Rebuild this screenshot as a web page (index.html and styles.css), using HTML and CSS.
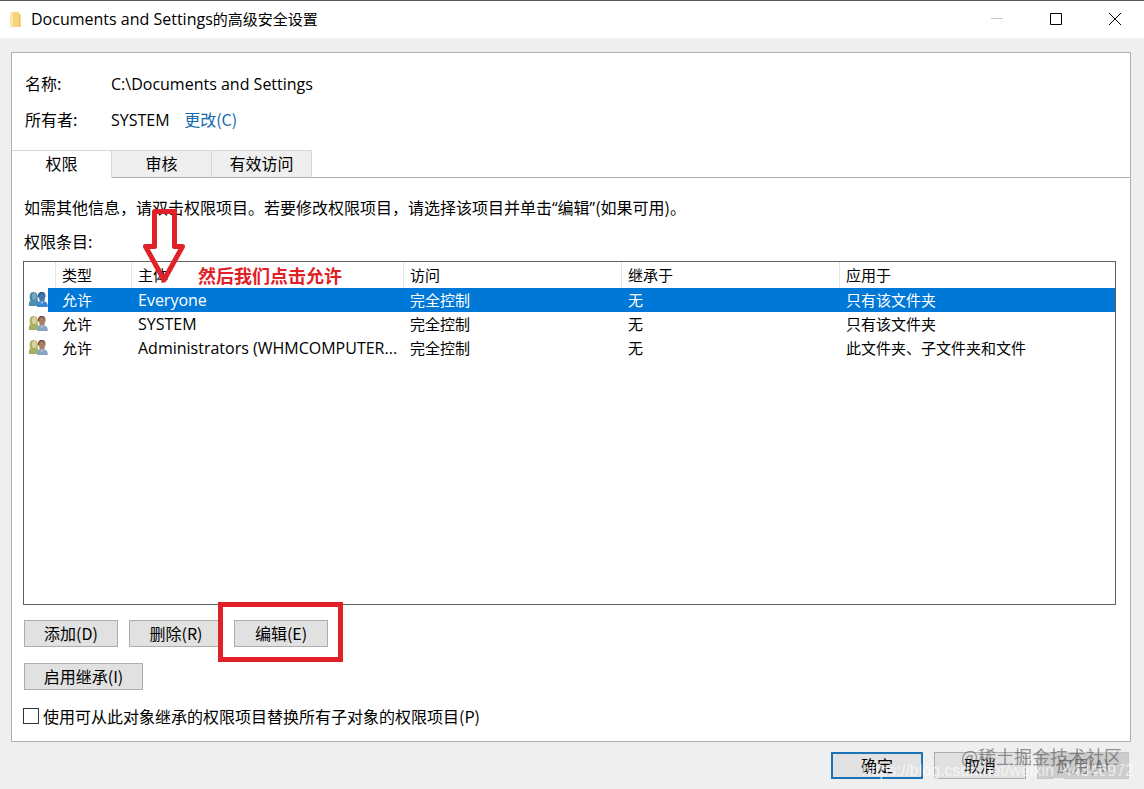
FILE: index.html
```html
<!DOCTYPE html>
<html lang="zh-CN">
<head>
  <meta charset="UTF-8" />
  <title>Documents and Settings的高级安全设置</title>
  <meta name="viewport" content="width=device-width, initial-scale=1" />
  <link rel="stylesheet" href="styles.css">
</head>
<body>

  <svg class="defs" width="0" height="0" aria-hidden="true">
    <symbol id="users" viewBox="0 0 20 18">
      <path class="body-a" d="M1 15c-.6-4 .6-6 4-6.500h3c2.500.5 3.500 3 3 6.500z" />
      <path class="hair-a" d="M2 9.500C1 4 2 1 5.500 1s5 3 4 8.500z" />
      <ellipse class="face-a" cx="6.300" cy="5.500" rx="2.300" ry="3.400" />
      <path class="body-b" d="M9 16c-.3-4 1-5.500 4-6h2.500c3 .6 4.500 2.500 4.300 6z" />
      <path class="hair-b" d="M9.800 6.500C9.500 3 11 1 13.800 1s4.200 2 3.500 5.500z" />
      <ellipse class="face-b" cx="14" cy="6.500" rx="3" ry="4.200" />
      <path class="shirt" d="M12.500 10.500l1.500 3 1.500-3z" />
    </symbol>
  </svg>

  <header class="titlebar">
    <svg class="folder" width="12" height="18" viewBox="0 0 12 18" aria-hidden="true">
      <path d="M0 1h9v13l2 0v2H0z" fill="#f6d57c" />
      <path d="M0 1h3v16l-3-1z" fill="#fbe7a8" />
      <path d="M9 3h1.500v12H9z" fill="#e9bd55" />
    </svg>
    <h1><span class="latin">Documents and Settings</span>的高级安全设置</h1>
    <div class="window-buttons">
      <button type="button" aria-label="最小化" disabled>
        <svg width="12" height="12" viewBox="0 0 12 12"><path d="M0 5.500h12" stroke="#c4c4c4" /></svg>
      </button>
      <button type="button" aria-label="最大化">
        <svg width="12" height="12" viewBox="0 0 12 12"><path d="M.5.5h11v11H.5z" fill="none" stroke="#000" /></svg>
      </button>
      <button type="button" aria-label="关闭">
        <svg width="12" height="12" viewBox="0 0 12 12"><path d="M0 0l12 12M12 0L0 12" stroke="#000" /></svg>
      </button>
    </div>
  </header>

  <main class="panel">
    <dl class="info">
      <dt>名称:</dt>
      <dd><span class="latin">C:\Documents and Settings</span></dd>
      <dt>所有者:</dt>
      <dd><span class="latin">SYSTEM</span> <a href="#">更改(C)</a></dd>
    </dl>

    <div class="tabs" role="tablist">
      <button type="button" role="tab" class="tab active" aria-selected="true">权限</button>
      <button type="button" role="tab" class="tab">审核</button>
      <button type="button" role="tab" class="tab">有效访问</button>
    </div>

    <section class="content">
      <p class="hint">如需其他信息，请双击权限项目。若要修改权限项目，请选择该项目并单击<span class="latin">“</span>编辑<span class="latin">”</span>(如果可用)。</p>
      <p class="list-title" id="list-title">权限条目:</p>

      <div class="list">
        <table aria-labelledby="list-title">
          <colgroup>
            <col class="col-icon"><col class="col-type"><col class="col-name"><col class="col-access"><col class="col-from"><col>
          </colgroup>
          <thead>
            <tr>
              <th></th>
              <th>类型</th>
              <th class="marked">主体
                <svg class="arrow" width="42" height="76" viewBox="0 0 42 76" aria-hidden="true">
                  <path d="M11.500 3.500h20v35h8L21 72 2.500 38.500h9z" fill="none" stroke="#e02127" stroke-width="5" stroke-linejoin="round" />
                </svg>
                <span class="note">然后我们点击允许</span>
              </th>
              <th>访问</th>
              <th>继承于</th>
              <th>应用于</th>
            </tr>
          </thead>
          <tbody>
            <tr class="selected">
              <td><svg class="users blue" width="20" height="18"><use href="#users" /></svg></td>
              <td>允许</td>
              <td><span class="latin">Everyone</span></td>
              <td>完全控制</td>
              <td>无</td>
              <td>只有该文件夹</td>
            </tr>
            <tr>
              <td><svg class="users" width="20" height="18"><use href="#users" /></svg></td>
              <td>允许</td>
              <td><span class="latin">SYSTEM</span></td>
              <td>完全控制</td>
              <td>无</td>
              <td>只有该文件夹</td>
            </tr>
            <tr>
              <td><svg class="users" width="20" height="18"><use href="#users" /></svg></td>
              <td>允许</td>
              <td><span class="latin">Administrators (WHMCOMPUTER...</span></td>
              <td>完全控制</td>
              <td>无</td>
              <td>此文件夹、子文件夹和文件</td>
            </tr>
          </tbody>
        </table>
      </div>

      <div class="actions">
        <button type="button" class="btn">添加(D)</button>
        <button type="button" class="btn">删除(R)</button>
        <span class="highlight"><button type="button" class="btn">编辑(E)</button></span>
      </div>
      <div class="actions">
        <button type="button" class="btn wide">启用继承(I)</button>
      </div>

      <label class="replace">
        <input type="checkbox">
        使用可从此对象继承的权限项目替换所有子对象的权限项目(P)
      </label>
    </section>
  </main>

  <footer class="footer">
    <button type="button" class="btn default">确定</button>
    <button type="button" class="btn">取消</button>
    <button type="button" class="btn" disabled>应用(A)</button>
    <span class="watermark community">@稀土掘金技术社区</span>
    <span class="watermark blog">https://blog.csdn.net/weixin_44346972</span>
  </footer>

</body>
</html>
```

FILE: styles.css
```css
* {
  box-sizing: border-box;
}
body {
  margin: 0;
  min-height: 100vh;
  display: flex;
  flex-direction: column;
  border-top: 1px solid #5c5858;
  background: #efefef;
  color: #000;
  font: 16px/24px "Noto Sans CJK SC", sans-serif;
}
h1, p, dl, dd {
  margin: 0;
}
button {
  font: inherit;
  color: inherit;
}
.latin {
  font: 16px/22px "Open Sans", sans-serif;
}
.defs {
  position: absolute;
}

/* title bar */
.titlebar {
  display: flex;
  align-items: center;
  height: 37px;
  padding-left: 10px;
  background: #fff;
}
.titlebar h1 {
  flex: 1;
  margin-left: 9px;
  padding-bottom: 2px;
  font-size: 15px;
  font-weight: normal;
}
.window-buttons {
  display: flex;
}
.window-buttons button {
  width: 59px;
  height: 37px;
  padding: 0 0 2px;
  border: 0;
  background: none;
}
.window-buttons svg {
  display: block;
  margin: auto;
}

/* main panel */
.panel {
  flex: 1;
  display: flex;
  flex-direction: column;
  margin: 14px 13px 0 11px;
  border: 1px solid #b0b0b0;
  background: #fff;
}
.info {
  display: grid;
  grid-template-columns: 86px 1fr;
  row-gap: 12px;
  padding: 18px 13px 19px;
}
.info a {
  margin-left: 11px;
  color: #1468ae;
  text-decoration: none;
}

.tabs {
  display: flex;
}
.tabs::after {
  content: "";
  flex: 1;
  border-bottom: 1px solid #b0b0b0;
}
.tab {
  width: 100px;
  height: 28px;
  padding: 0 0 2px;
  border: 1px solid #d5d5d5;
  border-left: 0;
  border-bottom-color: #b0b0b0;
  background: #efefef;
  line-height: 24px;
}
.tab.active {
  border-bottom-color: #fff;
  background: #fff;
}

.content {
  flex: 1;
  display: flex;
  flex-direction: column;
  padding: 17px 14px 13px 11px;
}
.hint, .list-title {
  padding-left: 1px;
}
.list-title {
  margin: 10px 0 8px;
}

/* permission entries */
.list {
  flex: 1;
  border: 1px solid #5f5f5f;
}
table {
  width: 100%;
  table-layout: fixed;
  border-collapse: collapse;
  font-size: 15px;
  line-height: 22px;
}
.col-icon { width: 32px; }
.col-type { width: 76px; }
.col-name { width: 272px; }
.col-access { width: 218px; }
.col-from { width: 218px; }
th, td {
  height: 24px;
  padding: 0 6px;
  text-align: left;
  font-weight: normal;
  white-space: nowrap;
}
th {
  height: 26px;
  box-shadow: inset -1px 0 #e5e5e5;
}
th:last-child {
  box-shadow: none;
}
td:first-child {
  padding: 0 4px;
}
.selected {
  background: #0078d7;
  color: #fff;
}
.selected td:first-child {
  background: linear-gradient(to right, #fff 24px, #0078d7 24px);
}
.users {
  display: block;
  --hair-a: #b9ae68;
  --face-a: #ddd3a0;
  --body-a: #a3b35c;
  --hair-b: #6b4a3c;
  --face-b: #a97d62;
  --body-b: #86a5c4;
}
.users.blue {
  --hair-a: #4f8a9e;
  --face-a: #6fa9c4;
  --body-a: #4a8fae;
  --hair-b: #24599a;
  --face-b: #3f78ab;
  --body-b: #3c86cf;
}
.hair-a { fill: var(--hair-a); }
.face-a { fill: var(--face-a); }
.body-a { fill: var(--body-a); }
.hair-b { fill: var(--hair-b); }
.face-b { fill: var(--face-b); }
.body-b { fill: var(--body-b); }
.shirt { fill: #d5e2ee; opacity: .7; }

/* red notes drawn over the list */
.marked {
  position: relative;
}
.arrow {
  position: absolute;
  left: 11px;
  bottom: 4px;
}
.note {
  position: absolute;
  left: 66px;
  top: 0;
  color: #e02127;
  font: bold 18px/26px "Noto Sans CJK SC", sans-serif;
}
.highlight {
  position: relative;
  display: flex;
}
.highlight::before {
  content: "";
  position: absolute;
  inset: -18px -15px -15px -16px;
  border: 5px solid #e02127;
  pointer-events: none;
}

/* buttons */
.actions {
  display: flex;
  gap: 11px;
  margin-top: 15px;
  padding-left: 1px;
}
.actions + .actions {
  margin-top: 16px;
}
.btn {
  width: 94px;
  height: 27px;
  padding: 0 0 2px;
  border: 1px solid #adadad;
  background: #e1e1e1;
  line-height: 22px;
}
.btn.wide {
  width: 119px;
}
.btn.default {
  border: 2px solid #1a73b5;
}
.btn:disabled {
  border-color: #c6c6c6;
  background: #cccccc;
  color: #777;
}
.replace {
  display: flex;
  align-items: center;
  gap: 4px;
  margin-top: 14px;
}
.replace input {
  appearance: none;
  width: 16px;
  height: 16px;
  margin: 0;
  border: 1px solid #333;
  background: #fff;
}

.footer {
  position: relative;
  display: flex;
  justify-content: flex-end;
  gap: 11px;
  padding: 10px 15px 10px;
}
.footer .btn {
  width: 92px;
}
.watermark {
  position: absolute;
  white-space: nowrap;
  pointer-events: none;
}
.community {
  right: 22px;
  top: 2px;
  color: rgb(90 90 90 / 0.65);
  font-size: 18px;
}
.blog {
  right: 10px;
  bottom: 6px;
  color: rgb(255 255 255 / 0.65);
  font: 16px/24px "Liberation Sans", sans-serif;
}
```
